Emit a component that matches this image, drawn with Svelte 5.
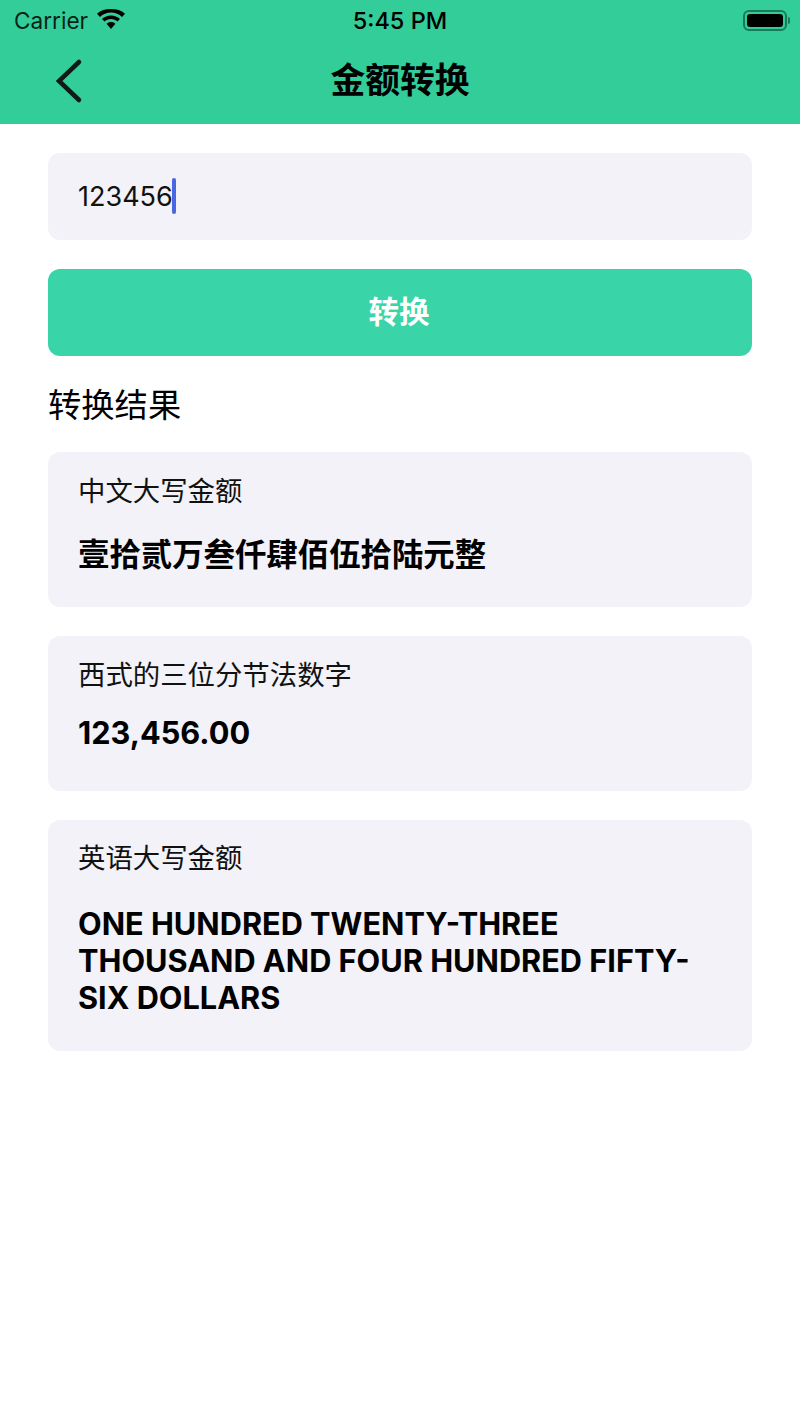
<script>
    let amount = "123456";

    const cards = [
        { label: "中文大写金额", value: "壹拾贰万叁仟肆佰伍拾陆元整", kind: "cn" },
        { label: "西式的三位分节法数字", value: "123,456.00", kind: "num" },
        { label: "英语大写金额", value: "ONE HUNDRED TWENTY-THREE THOUSAND AND FOUR HUNDRED FIFTY-SIX DOLLARS", kind: "en" }
    ];
</script>

<div class="root">
    <header class="head">
        <div class="status">
            <div class="status-left">
                <span class="carrier">Carrier</span>
                <svg class="wifi" viewBox="0 0 30 22" width="30" height="22">
                    <path d="M15 3.500c4.300 0 8.200 1.700 11 4.400l3-3.100C25.400 1.300 20.500 0 15 0S4.600 1.300 1 4.800l3 3.100C6.800 5.200 10.700 3.500 15 3.500z"/>
                    <path d="M15 10c2.500 0 4.800 0.900 6.500 2.500l2.500-2.500C21.600 7.800 18.500 6.400 15 6.400S8.400 7.800 6 10l2.500 2.500C10.200 10.900 12.500 10 15 10z"/>
                    <path d="M15 13c-1.800 0-3.300 0.700-4.400 1.700L15 20l4.400-5.300C18.300 13.700 16.800 13 15 13z"/>
                </svg>
            </div>
            <span class="time">5:45 PM</span>
            <div class="status-right">
                <span class="battery"><span class="battery-fill"></span></span>
                <span class="battery-tip"></span>
            </div>
        </div>
        <div class="nav">
            <button class="back" aria-label="返回">
                <svg viewBox="0 0 30 48" width="30" height="48">
                    <path d="M26 5 L6 24 L26 43" fill="none" stroke="#101a16" stroke-width="4.500" stroke-linecap="round" stroke-linejoin="miter"/>
                </svg>
            </button>
            <div class="title">金额转换</div>
        </div>
    </header>

    <main class="content">
        <div class="input">
            <span>{amount}</span><span class="caret"></span>
        </div>
        <button class="convert">转换</button>
        <div class="section">转换结果</div>
        {#each cards as card}
            <div class="card {card.kind}">
                <div class="label">{card.label}</div>
                <div class="value">{card.value}</div>
            </div>
        {/each}
    </main>
</div>

<style>
:global(body) {
    margin: 0;
    background: #fff;
}

.root {
    width: 800px;
    min-height: 1422px;
    background: #fff;
    color: #000;
    font-family: Inter, "Noto Sans CJK SC", sans-serif;
}

.head {
    height: 124px;
    background: #33cd99;
}

.status {
    height: 40px;
    display: grid;
    grid-template-columns: 1fr auto 1fr;
    align-items: center;
    padding: 0 10px 0 14px;
    font-size: 22.600px;
}

.status-left {
    display: flex;
    align-items: center;
    gap: 8px;
}

.carrier {
    color: #0a1f18;
}

.wifi {
    fill: #000;
    margin-bottom: 1px;
}

.time {
    font-size: 23.500px;
    font-weight: 500;
    margin-right: 4px;
}

.status-right {
    display: flex;
    justify-content: flex-end;
    align-items: center;
    gap: 1px;
}

.battery {
    box-sizing: border-box;
    width: 44px;
    height: 21px;
    padding: 2px;
    border: 2px solid #1a7a5c;
    border-radius: 6px;
    display: block;
}

.battery-fill {
    display: block;
    height: 100%;
    background: #000;
    border-radius: 3px;
}

.battery-tip {
    width: 2px;
    height: 7px;
    background: #1a7a5c;
    border-radius: 0 2px 2px 0;
}

.nav {
    position: relative;
    height: 84px;
    display: flex;
    align-items: center;
    justify-content: center;
}

.back {
    position: absolute;
    left: 53px;
    top: 17px;
    padding: 0;
    border: none;
    background: none;
    display: block;
    line-height: 0;
}

.title {
    font-size: 34.800px;
    font-weight: 700;
    line-height: 44px;
    margin-bottom: 4px;
}

.content {
    padding: 29px 48px 0;
    display: flex;
    flex-direction: column;
}

.input {
    height: 87px;
    box-sizing: border-box;
    padding-left: 30px;
    background: #f2f2f8;
    border-radius: 12px;
    display: flex;
    align-items: center;
    font-size: 27px;
    color: #111;
}

.caret {
    width: 4px;
    height: 36px;
    margin-left: -1px;
    margin-top: -1px;
    background: #4a66e0;
    border-radius: 2px;
}

.convert {
    height: 87px;
    margin-top: 29px;
    padding: 0 2px 5px 0;
    border: none;
    border-radius: 12px;
    background: #39d5a8;
    color: #fff;
    font-family: inherit;
    font-size: 30.500px;
    font-weight: 700;
}

.section {
    margin-top: 24px;
    font-size: 33.300px;
    line-height: 50px;
    height: 48px;
}

.card {
    box-sizing: border-box;
    margin-top: 24px;
    margin-bottom: 5px;
    padding: 17px 30px 0;
    background: #f2f2f8;
    border-radius: 12px;
    height: 155px;
}

.card.en {
    height: 231px;
    padding-top: 16px;
}

.label {
    font-size: 27.400px;
    line-height: 44px;
    color: #111;
}

.value {
    font-size: 31.400px;
    font-weight: 700;
    line-height: 37px;
    margin-top: 24px;
}

.card.num .value {
    margin-top: 17px;
    font-size: 30.700px;
}

.card.en .value {
    margin-top: 25px;
    font-size: 30.700px;
}
</style>
